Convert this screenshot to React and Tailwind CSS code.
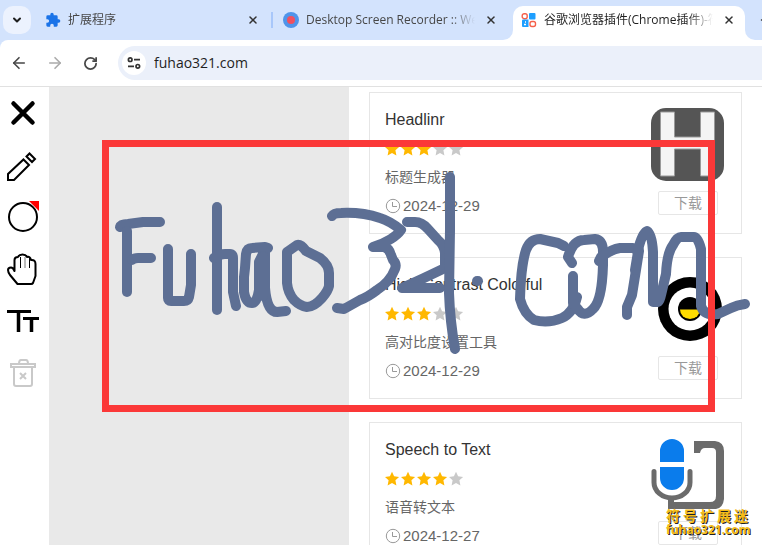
import { ArrowLeft, ArrowRight, ChevronDown, Plus, RotateCw, X } from "lucide-react";

const EXTENSIONS = [
  { name: "Headlinr", desc: "标题生成器", rating: 3, date: "2024-12-29", Logo: HeadlinrLogo },
  { name: "High Contrast Colorful", desc: "高对比度设置工具", rating: 3, date: "2024-12-29", Logo: ContrastLogo },
  { name: "Speech to Text", desc: "语音转文本", rating: 4, date: "2024-12-27", Logo: SpeechLogo },
];

// freehand pen strokes, in canvas pixels
const STROKES = [
  "M120 227Q121 224 128 224L143 222H160",
  "M127 231V292",
  "M132 260Q134 258 138 258H151",
  "M168 249V298Q168 301 171 301H184Q188 301 189 297L191 285V254",
  "M217 207V310",
  "M214 258Q220 254 225 254H230Q233 254 233 258V292L236 306",
  "M268 248L265 247L252 248Q247 248 246 254L245 268L244 277V292Q246 303 252 303Q257 303 259 290V262L265 250V288Q267 312 277 312L286 311",
  "M263 256V296",
  "M287 252L297 245Q301 244 306 251L320 258Q329 265 329 273V286Q328 291 322 298Q314 307 307 307Q300 306 294 300Q288 293 287 283V252",
  "M332 216Q334 213 341 213Q362 212 380 218Q390 221 401 230Q394 240 373 247H384Q389 248 391 255L393 260Q397 264 395 269Q390 282 377 290Q368 297 360 300L344 309L337 308",
  "M407 222H415Q422 222 428 229L438 240Q444 245 445 253V268L424 278L402 288H440",
  "M450 177L450 230L449 293Q450 321 455 349",
  "M477 281H478",
  "M564 246L558 243L540 239Q530 239 526 250Q521 265 520 299Q524 314 534 320Q548 324 562 318Q573 313 577 297",
  "M572 263L568 257Q573 240 584 240L595 239Q603 240 603 252V265Q602 301 593 309Q584 319 577 308L573 303V276",
  "M599 261L601 257Q612 249 620 248H633L639 251L636 270L632 295L627 307V315",
  "M635 270L639 246Q643 232 647 231Q652 234 653 252V302H658Q660 300 661 295L666 274Q667 253 673 245Q677 237 681 237H694Q698 237 701 249V306Q704 316 718 314L731 308Q737 305 745 304",
];

function HeadlinrLogo() {
  return (
    <svg viewBox="0 0 73 73" className="size-[73px]" aria-hidden="true">
      <rect width="73" height="73" rx="15" fill="#555" />
      <path d="M9.500 4h14v25h26V4h14v64h-14V41h-26v27h-14z" fill="#f4f4f4" stroke="#999" />
    </svg>
  );
}

function ContrastLogo() {
  return (
    <svg viewBox="0 0 73 73" className="size-[73px]" aria-hidden="true">
      <circle cx="39" cy="36" r="32" fill="#000" />
      <circle cx="39" cy="36" r="21.500" fill="#fff" />
      <circle cx="39" cy="36" r="12" fill="#000" />
      <path d="M29 36.500h20a10 9.500 0 0 1-20 0z" fill="#ffdc00" />
    </svg>
  );
}

function SpeechLogo() {
  return (
    <svg viewBox="0 0 73 73" className="size-[73px]" aria-hidden="true">
      <path d="M9 24V13a12 12 0 0 1 24 0v11zM9 29h24v11a12 12 0 0 1-24 0z" fill="#0a7cec" />
      <path d="M3 33.500v11a18 15.500 0 0 0 36 0v-11" fill="none" stroke="#6b6b6b" strokeWidth="5" strokeLinecap="round" />
      <path
        d="M43 3h21q9 1 9 10v48q-1 9-8 10H17V58h6v6h36q6 0 6-6V14q0-4-4-4h-7q-4 0-5 5h-6z"
        fill="#6b6b6b"
      />
    </svg>
  );
}

function Stars({ rating }) {
  return (
    <div className="flex h-4" role="img" aria-label={`${rating} / 5`}>
      {[1, 2, 3, 4, 5].map((n) => (
        <svg key={n} viewBox="0 0 16 16" className="size-4" aria-hidden="true">
          <path
            d="M7 .800l2.100 4.500 5 .600-3.700 3.400 1 5.200L7 11.900l-4.400 2.600 1-5.200L-.100 5.900l5-.600z"
            fill={n <= rating ? "#ffb800" : "#c9c9c9"}
          />
        </svg>
      ))}
    </div>
  );
}

function ExtensionCard({ item }) {
  const { Logo } = item;
  return (
    <article className="flex h-[142px] shrink-0 justify-between border border-[#e6e6e6] bg-white pr-[17px] pl-[15px]">
      <div className="flex min-w-0 flex-col pt-[17px] text-[#666]">
        <h2 className="text-base leading-5 whitespace-nowrap text-[#333]">{item.name}</h2>
        <div className="mt-[11px]">
          <Stars rating={item.rating} />
        </div>
        <p className="mt-[10px] text-sm leading-5">{item.desc}</p>
        <p className="mt-[9px] flex items-center gap-[2px] text-[15px] leading-5">
          <svg viewBox="0 0 16 16" className="size-4" fill="none" stroke="#999" aria-hidden="true">
            <circle cx="8" cy="8" r="6.700" />
            <path d="M7.500 4v4.500H12" />
          </svg>
          <time>{item.date}</time>
        </p>
      </div>
      <div className="flex shrink-0 flex-col items-end pt-[15px]">
        <Logo />
        <button className="mt-[10px] mr-[6px] h-6 w-[60px] rounded-xs border border-[#e6e6e6] text-sm leading-5 text-[#999]">
          下载
        </button>
      </div>
    </article>
  );
}

function Tab({ icon, title, active }) {
  return (
    <div className="flex min-w-0 flex-1 items-center">
      {icon}
      <span
        className={
          active
            ? "ml-[7px] min-w-0 flex-1 overflow-hidden mask-r-from-85% whitespace-nowrap text-[#1f1f1f]"
            : "ml-[7px] min-w-0 flex-1 overflow-hidden mask-r-from-85% whitespace-nowrap text-[#474747]"
        }
      >
        {title}
      </span>
      <button className="ml-2 flex size-4 items-center justify-center text-[#333]" aria-label="关闭">
        <X className="size-3" strokeWidth={3} />
      </button>
    </div>
  );
}

function TabStrip() {
  return (
    <div className="flex h-10 shrink-0 items-end bg-[#d3e3fd] text-xs leading-5">
      <button className="mb-[6px] ml-[3px] flex size-7 shrink-0 items-center justify-center rounded-[10px] bg-[#ecf2fe]" aria-label="搜索标签页">
        <ChevronDown className="size-3 text-[#1f1f1f]" strokeWidth={4} />
      </button>
      <div className="mb-[6px] ml-[14px] flex h-7 w-[216px] shrink-0">
        <Tab
          title="扩展程序"
          icon={
            <svg viewBox="0 0 24 24" className="size-4 shrink-0" fill="#1a73e8" aria-hidden="true">
              <path d="M20.500 11H19V7a2 2 0 0 0-2-2h-4V3.500a2.500 2.500 0 0 0-5 0V5H4a2 2 0 0 0-2 2v3.800h1.500a2.700 2.700 0 0 1 0 5.400H2V20a2 2 0 0 0 2 2h3.800v-1.500a2.700 2.700 0 0 1 5.400 0V22H17a2 2 0 0 0 2-2v-4h1.500a2.500 2.500 0 0 0 0-5z" />
            </svg>
          }
        />
      </div>
      <div className="mb-3 ml-[10px] h-4 w-[2px] shrink-0 bg-[#a8c7fa]" />
      <div className="mb-[6px] ml-[10px] flex h-7 w-[216px] shrink-0">
        <Tab
          title="Desktop Screen Recorder :: Web"
          icon={
            <svg viewBox="0 0 16 16" className="size-4 shrink-0" aria-hidden="true">
              <circle cx="8" cy="8" r="8" fill="#4f94ea" />
              <circle cx="8" cy="8" r="4" fill="#f05060" />
            </svg>
          }
        />
      </div>
      <div className="h-[10px] w-[14px] shrink-0 bg-white">
        <div className="h-full rounded-br-[10px] bg-[#d3e3fd]" />
      </div>
      <div className="flex h-[34px] min-w-0 flex-1 rounded-t-[10px] bg-white pr-2 pb-[6px] pl-2">
        <Tab
          active
          title="谷歌浏览器插件(Chrome插件)-符号"
          icon={
            <svg viewBox="0 0 16 16" className="size-4 shrink-0" fill="none" strokeWidth="1.400" aria-hidden="true">
              <rect x="1.200" y="1.700" width="5" height="5" rx="2" stroke="#f5604a" />
              <rect x="8" y="1" width="6.500" height="6.500" rx="1" fill="#1e9fff" />
              <path d="M2 7.500h5.500V15H2q-1 0-1-1V8.500q0-1 1-1z" fill="#1e9fff" />
              <rect x="9" y="9.500" width="5.500" height="5" rx="2" stroke="#f5604a" />
              <path d="M3 12.500h2M4 10h1" stroke="#fff" />
            </svg>
          }
        />
      </div>
      <div className="h-[10px] w-[10px] shrink-0 bg-white">
        <div className="h-full rounded-bl-[10px] bg-[#d3e3fd]" />
      </div>
      <div className="mb-[14px] ml-[4px] w-[3px] shrink-0 overflow-hidden">
        <Plus className="size-3 text-[#333]" strokeWidth={3} />
      </div>
    </div>
  );
}

function AddressBar() {
  return (
    <div className="flex h-[47px] shrink-0 items-center rounded-tl-lg border-b border-[#e1e1e1] bg-white pl-[10px] text-[#474747]">
      <button aria-label="返回"><ArrowLeft className="size-[18px]" strokeWidth={2.2} /></button>
      <button className="ml-[18px] text-[#ababab]" aria-label="前进"><ArrowRight className="size-[18px]" strokeWidth={2.2} /></button>
      <button className="ml-[19px]" aria-label="重新加载">
        <RotateCw className="size-[15px]" strokeWidth={2.8} />
      </button>
      <div className="ml-5 flex h-[34px] flex-1 items-center rounded-l-full bg-[#ebf0fa] pl-1">
        <button className="flex size-6 shrink-0 items-center justify-center rounded-full bg-white" aria-label="查看网站信息">
          <svg viewBox="0 0 14 14" className="size-[14px]" fill="none" stroke="#333" strokeWidth="1.700" aria-hidden="true">
            <circle cx="3.200" cy="3.700" r="1.800" />
            <path d="M7 3.700h6M1 10.300h6" />
            <circle cx="10.800" cy="10.300" r="1.800" />
          </svg>
        </button>
        <input
          className="ml-2 min-w-0 flex-1 bg-transparent text-sm leading-5 text-[#1f1f1f] outline-none"
          defaultValue="fuhao321.com"
          aria-label="地址栏"
        />
      </div>
    </div>
  );
}

function DrawingTools() {
  return (
    <aside className="flex w-[49px] shrink-0 flex-col items-center gap-5 bg-white pt-[10px] pr-[3px]">
      <button aria-label="关闭">
        <svg viewBox="0 0 32 32" className="size-8" stroke="#000" strokeWidth="4.500" strokeLinecap="round">
          <path d="M6.500 6.500l19 19M25.500 6.500l-19 19" />
        </svg>
      </button>
      <button aria-label="画笔">
        <svg viewBox="0 0 32 32" className="size-8" fill="none" stroke="#000" strokeWidth="2">
          <path d="M16.500 10.500l5.500 5.500L7 31H1v-6zM19.500 7.500l3-3 5.500 5.500-3 3z" />
        </svg>
      </button>
      <button aria-label="形状">
        <svg viewBox="0 0 32 32" className="size-8" fill="none">
          <circle cx="16" cy="16" r="14" stroke="#000" strokeWidth="2" />
          <path d="M22 0h10v10z" fill="red" />
        </svg>
      </button>
      <button aria-label="移动">
        <svg viewBox="0 0 32 32" className="size-8" fill="none" stroke="#000" strokeWidth="2" strokeLinejoin="round" strokeLinecap="round">
          <path d="M10.500 31L3 22Q1 19 1 17q0-2.500 3-2.500 2 0 3.500 3.500V7q0-3 3.500-3 1-2.500 4.500-2.500T20 4q3-1 4 3 4.500-.500 4.500 4v12L26 30q-.500 1-2 1z" />
          <path d="M13.500 4v11M22.500 5v10" strokeWidth="1" strokeLinecap="butt" />
          <path d="M18 4v11" stroke="#bbb" strokeLinecap="butt" />
        </svg>
      </button>
      <button aria-label="文字">
        <svg viewBox="0 0 32 32" className="size-8" fill="none" stroke="#000">
          <path d="M0 6.500h24M16 13.500h16" strokeWidth="3" />
          <path d="M11.500 7v20M24.500 13v14" strokeWidth="3.500" />
        </svg>
      </button>
      <button aria-label="清空" disabled>
        <svg viewBox="0 0 32 32" className="size-8" fill="none" stroke="#c9c9c9" strokeWidth="2">
          <path d="M4 7h24v3H4zM12 7q0-4 2-4h5q2 0 2 4M7 10v17q0 2 2 2h14q2 0 2-2V10" />
          <path d="M13 16l6 6M19 16l-6 6" />
        </svg>
      </button>
    </aside>
  );
}

export default function App() {
  return (
    <div className="relative flex h-screen flex-col overflow-hidden bg-[#d3e3fd] font-['Open_Sans','Noto_Sans_CJK_SC',sans-serif]">
      <TabStrip />
      <AddressBar />
      <div className="flex min-h-0 flex-1">
        <DrawingTools />
        <div className="w-[300px] shrink-0 bg-[#e9e9e9]" />
        <main className="flex min-w-0 flex-1 flex-col gap-[23px] overflow-hidden bg-white px-5 pt-[5px] font-['Liberation_Sans','Noto_Sans_CJK_SC',sans-serif]">
          {EXTENSIONS.map((item) => (
            <ExtensionCard key={item.name} item={item} />
          ))}
        </main>
      </div>

      {/* Annotation canvas */}
      <svg className="pointer-events-none absolute inset-0 h-full w-full" fill="none" aria-hidden="true">
        <g stroke="#5d6f94" strokeWidth="10" strokeLinecap="round" strokeLinejoin="round">
          {STROKES.map((d) => (
            <path key={d} d={d} />
          ))}
        </g>
        <rect x="105.500" y="143.500" width="606" height="265" stroke="#fb3838" strokeWidth="7" />
      </svg>

      {/* Watermark */}
      <div className="absolute right-[14px] bottom-[9px] w-[82px] font-['Open_Sans','Noto_Sans_CJK_SC',sans-serif] font-bold text-[#f5bd1a] [text-shadow:1px_1px_0_#222]">
        <div className="flex justify-between text-sm leading-4">
          {[..."符号扩展迷"].map((ch) => (
            <span key={ch}>{ch}</span>
          ))}
        </div>
        <div className="text-xs leading-3">fuhao321.com</div>
      </div>
    </div>
  );
}
